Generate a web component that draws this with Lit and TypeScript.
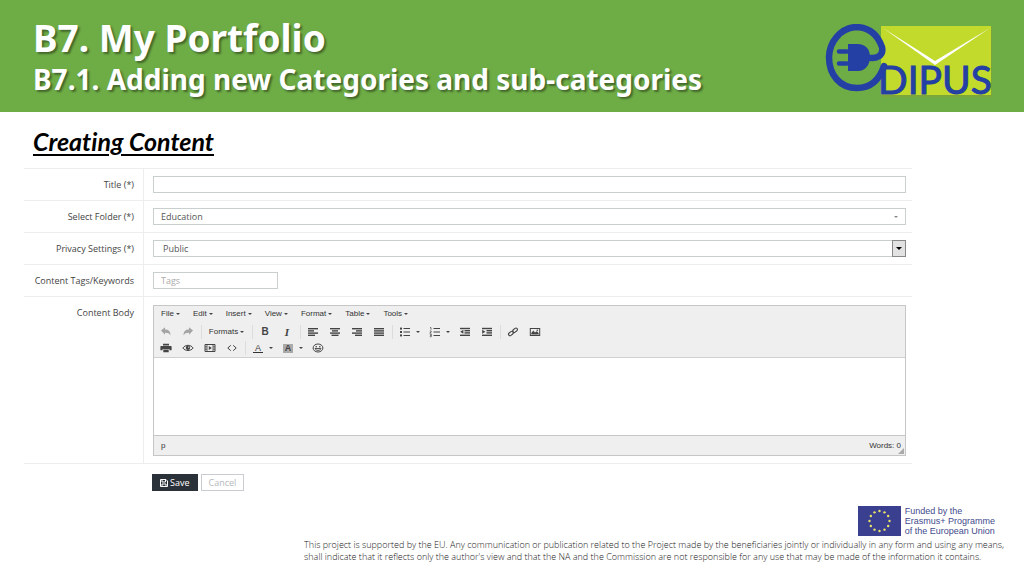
import { LitElement, html, css, svg } from "lit";
import { customElement, property } from "lit/decorators.js";

const line = (x: number, y: number, w: number, h = 1.4) =>
  svg`<rect x=${x} y=${y} width=${w} height=${h} />`;

const icons: Record<string, unknown> = {
  undo: svg`<path fill="#a5a5a5" d="M1 4.6 5 1.2v2.2c3.6 0 5.6 1.8 5.4 6-.9-2-2.3-2.7-5.4-2.7v2z"/>`,
  redo: svg`<path fill="#a5a5a5" d="M11 4.6 7 1.2v2.2c-3.6 0-5.6 1.8-5.4 6 .9-2 2.3-2.7 5.4-2.7v2z"/>`,
  alignleft: svg`${line(1, 2, 10)}${line(1, 4.2, 6)}${line(1, 6.4, 10)}${line(1, 8.6, 7)}`,
  aligncenter: svg`${line(1, 2, 10)}${line(3, 4.2, 6)}${line(1, 6.4, 10)}${line(2.5, 8.6, 7)}`,
  alignright: svg`${line(1, 2, 10)}${line(5, 4.2, 6)}${line(1, 6.4, 10)}${line(4, 8.6, 7)}`,
  alignjustify: svg`${line(1, 2, 10)}${line(1, 4.2, 10)}${line(1, 6.4, 10)}${line(1, 8.6, 10)}`,
  bullist: svg`${line(1, 1.6, 2, 2)}${line(1, 5, 2, 2)}${line(1, 8.4, 2, 2)}${line(4.5, 2, 6.5, 1)}${line(4.5, 5.5, 6.5, 1)}${line(4.5, 9, 6.5, 1)}`,
  numlist: svg`<path fill="none" stroke="currentColor" stroke-width=".7" d="M1 1.6h1v2.2M.8 5h1.4v.9l-1.4 1.1h1.6M.8 8.2h1.5v2.5H.8M1 9.4h1.3"/>${line(4.5, 2, 6.5, 1)}${line(4.5, 5.5, 6.5, 1)}${line(4.5, 9, 6.5, 1)}`,
  outdent: svg`${line(1, 1.8, 10)}${line(5.5, 4, 5.5)}${line(5.5, 6.2, 5.5)}${line(1, 8.6, 10)}<path d="M4.4 3.8v4L1.2 5.8z"/>`,
  indent: svg`${line(1, 1.8, 10)}${line(5.5, 4, 5.5)}${line(5.5, 6.2, 5.5)}${line(1, 8.6, 10)}<path d="M1.2 3.8v4l3.2-2z"/>`,
  link: svg`<g fill="none" stroke="currentColor" stroke-width="1.1"><rect x="-2.6" y="-1.5" width="5.2" height="3" rx="1.5" transform="translate(3.9 7.5) rotate(-38)"/><rect x="-2.6" y="-1.5" width="5.2" height="3" rx="1.5" transform="translate(8.1 4.3) rotate(-38)"/></g>`,
  image: svg`<path fill-rule="evenodd" d="M.8 2h10.400v8H.8zM1.800 3v6h8.400V3z"/><path d="M2.300 8.500V7l2-2.400 1.600 1.800 2-1.200 1.800 2v1.300z"/><circle cx="8.3" cy="4.3" r=".8"/>`,
  print: svg`<path d="M3 1.8h6v1.700H3zM1 4.100h10a.6.6 0 0 1 .6.600v3.500H9.400V7H2.600v1.200H.4V4.700A.6.6 0 0 1 1 4.100zM3.300 7.600h5.400v2.600H3.300z"/>`,
  preview: svg`<path fill="none" stroke="currentColor" d="M.8 6C3.5 2.4 8.5 2.4 11.2 6 8.5 9.4 3.5 9.4.8 6z"/><circle cx="6" cy="5.8" r="2.2"/><circle cx="6.7" cy="5.2" r=".6" fill="#eee"/>`,
  media: svg`<path fill="none" stroke="currentColor" d="M1 2.5h10v7H1z"/><path fill="none" stroke="currentColor" stroke-width=".8" d="M3 2.5v7M9 2.5v7M1 4.800h2M1 7.200h2M9 4.800h2M9 7.200h2"/><path d="M4.800 4.100v3.800L7.800 6z"/>`,
  code: svg`<path fill="none" stroke="currentColor" d="M4.8 3.3 1.8 6l3 2.7M7.2 3.3l3 2.7-3 2.7"/>`,
  smile: svg`<ellipse cx="6" cy="6" rx="4.9" ry="4" fill="none" stroke="currentColor"/><circle cx="4.2" cy="4.7" r=".8"/><circle cx="7.8" cy="4.7" r=".8"/><path fill="none" stroke="currentColor" stroke-width=".9" d="M3 6.5h6C8.5 9 3.5 9 3 6.5z"/>`,
};

const icon = (name: string) =>
  html`<svg class="icon" viewBox="0 0 12 12" width="12" height="12" fill="currentColor" aria-hidden="true">${icons[name]}</svg>`;

@customElement("edipus-logo")
class EdipusLogo extends LitElement {
  static styles = css`
    :host { display: block; }
    .logo { display: block; }
    .word { font-family: "Lato", sans-serif; font-size: 39px; fill: #2440a4; stroke: #2440a4; stroke-width: 1px; }
  `;
  render() {
    return html`<svg class="logo" width="168" height="74" viewBox="0 0 168 74" role="img" aria-label="eDIPUS">
      <rect x="57" y="3" width="110" height="70" fill="#8a9f2c" opacity=".5" />
      <rect x="56" y="2" width="110" height="69" fill="#c1da2c" />
      <path d="M58 4 110 37 165 4 110 41z" fill="#fff" />
      <path d="M41 33C51 36 59 32 57 23 52 9 43 3 30 3A29 31 0 0 0 4 33c0 18 11 31 28 31 15 0 23-10 27-22" fill="none" stroke="#2440a4" stroke-width="6.5" stroke-linecap="round" />
      <path d="M23 20h10c7 0 12 5 12 13s-5 14-12 14H23z" fill="#2440a4" />
      <path d="M14 27.5h8M14 39.5h8" stroke="#2440a4" stroke-width="4.5" stroke-linecap="round" />
      <text class="word" x="53" y="70">DIPUS</text>
    </svg>`;
  }
}

@customElement("rich-editor")
class RichEditor extends LitElement {
  @property() label = "";
  static styles = css`
    :host { display: block; font-family: "Liberation Sans", Arial, sans-serif; font-size: 8px; line-height: 10px; color: #333; }
    .editor { border: 1px solid #c6c6c6; position: relative; }
    .head { background: #efefef; border-bottom: 1px solid #d0d0d0; padding: 1px; }
    button { appearance: none; border: 0; background: none; margin: 0; padding: 0; font: inherit; color: inherit; }
    .menu { display: flex; gap: 13px; padding: 2px 6px 4px; }
    .menu button, .formats { display: flex; align-items: center; gap: 2px; }
    .caret { border: 2px solid transparent; border-top-color: #444; border-bottom: 0; }
    .tools { display: flex; align-items: center; height: 16px; }
    .first { height: 17px; }
    .tool { width: 22px; height: 16px; display: flex; align-items: center; justify-content: center; color: #444; }
    .split { display: flex; align-items: center; width: 30px; }
    .formats { width: 47px; height: 16px; justify-content: center; }
    .sep { width: 1px; height: 14px; margin: 0 1px 0 2px; background: #dcdcdc; }
    .bold { font-weight: 700; font-size: 10px; }
    .italic { font: italic 700 11px "Liberation Serif", serif; }
    .fore { border-bottom: 1px solid #333; padding: 0 2px; line-height: 8px; font-size: 9px; }
    .back { background: #aaa; padding: 0 2px; line-height: 9px; font-size: 9px; font-weight: 700; }
    textarea { display: block; box-sizing: border-box; width: 100%; height: 77px; border: 0; padding: 8px; resize: none; background: #fff; font: inherit; outline: 0; }
    .status { display: flex; justify-content: space-between; background: #efefef; border-top: 1px solid #c6c6c6; padding: 5px 4px 4px 7px; }
    .grip { position: absolute; right: 1px; bottom: 1px; }
  `;
  private tool(name: string) {
    return html`<button class="tool" type="button" aria-label=${name}>${icon(name)}</button>`;
  }
  private split(name: string, face: unknown) {
    return html`<div class="split">
      <button class="tool" type="button" aria-label=${name}>${face}</button>
      <button type="button" aria-label="${name} options"><div class="caret"></div></button>
    </div>`;
  }
  render() {
    const sep = html`<div class="sep"></div>`;
    return html`<div class="editor">
      <div class="head">
        <div class="menu">
          ${["File", "Edit", "Insert", "View", "Format", "Table", "Tools"].map(
            (m) => html`<button type="button">${m}<span class="caret"></span></button>`
          )}
        </div>
        <div class="tools first">
          ${this.tool("undo")}${this.tool("redo")}${sep}
          <button class="formats" type="button">Formats<span class="caret"></span></button>${sep}
          <button class="tool bold" type="button">B</button>
          <button class="tool italic" type="button">I</button>${sep}
          ${["alignleft", "aligncenter", "alignright", "alignjustify"].map((n) => this.tool(n))}${sep}
          ${this.split("bullist", icon("bullist"))}${this.split("numlist", icon("numlist"))}
          ${this.tool("outdent")}${this.tool("indent")}${sep}
          ${this.tool("link")}${this.tool("image")}
        </div>
        <div class="tools">
          ${["print", "preview", "media", "code"].map((n) => this.tool(n))}${sep}
          ${this.split("text colour", html`<span class="fore">A</span>`)}
          ${this.split("background colour", html`<span class="back">A</span>`)}
          ${this.tool("smile")}
        </div>
      </div>
      <textarea aria-label=${this.label}></textarea>
      <div class="status"><span>p</span><span>Words: 0</span></div>
      <svg class="grip" width="6" height="6" viewBox="0 0 6 6" fill="#aaa" aria-hidden="true">
        <path d="M6 0v6H0z" />
      </svg>
    </div>`;
  }
}

@customElement("app-root")
class AppRoot extends LitElement {
  static styles = css`
    :host { display: block; min-height: 100vh; background: #fff; font-family: "Open Sans", "Noto Sans", sans-serif; color: #444; }
    .banner { display: flex; justify-content: space-between; align-items: flex-start; background: #6eac46; height: 112px; box-sizing: border-box; padding: 15px 31px 0 33px; color: #fff; text-shadow: 2px 2px 2px rgba(0, 0, 0, 0.4); }
    h1, h2, h3, p { margin: 0; }
    h1 { font: 700 37px/46px "Noto Sans", sans-serif; }
    h2 { font: 700 28px/36px "Noto Sans", sans-serif; white-space: nowrap; }
    .banner edipus-logo { margin-top: 9px; text-shadow: none; }
    h3 { font: italic 700 25px/28px "Lato", sans-serif; font-variant-ligatures: none; color: #000; padding: 15px 33px 13px; text-decoration: underline; text-decoration-thickness: 2px; text-underline-offset: 3px; }
    form { margin: 0 112px 0 24px; font-size: 9px; line-height: 12px; }
    .row { display: grid; grid-template-columns: 120px 1fr; border-top: 1px solid #ededed; }
    .row > label, .row > .name { text-align: right; padding: 10px 9px 9px 0; border-right: 1px solid #ededed; }
    .cell { padding: 7px 6px 7px 9px; }
    .body .cell { padding-top: 8px; }
    .last { border-bottom: 1px solid #ededed; }
    .pick { position: relative; }
    input, select { appearance: none; display: block; box-sizing: border-box; width: 100%; height: 17px; border: 1px solid #c9cfcf; border-radius: 0; background: #fff; margin: 0; padding: 0 7px; font: inherit; color: #555; outline: 0; }
    .public { padding-left: 9px; }
    .tags { width: 125px; }
    .tags::placeholder { color: #aaa; opacity: 1; }
    .caret { position: absolute; right: 8px; top: 8px; border: 2px solid transparent; border-top-color: #888; border-bottom: 0; }
    .drop { position: absolute; right: 0; top: 0; box-sizing: border-box; width: 14px; height: 17px; border: 1px solid #888; background: #e2e2e2; display: grid; place-items: center; pointer-events: none; }
    .drop::after { content: ""; border: 3px solid transparent; border-top-color: #000; border-bottom: 0; }
    .actions { display: flex; gap: 3px; padding: 10px 0 0 128px; }
    .actions button { display: flex; align-items: center; gap: 2px; height: 17px; border: 1px solid #c9cdd2; background: #fff; color: #b4b8bd; font: inherit; padding: 0 7px; margin: 0; }
    .actions .save { background: #2b3138; border-color: #2b3138; color: #fff; }
    footer { padding: 15px 20px 0; }
    .eu { display: flex; justify-content: flex-end; gap: 4px; padding-right: 9px; }
    .eu p { font: 9px/10px "Liberation Sans", Arial, sans-serif; color: #434a8c; }
    .note { width: fit-content; margin-left: auto; font-size: 9px; font-weight: 300; line-height: 12px; color: #222; padding-top: 3px; }
  `;
  render() {
    const stars = Array.from({ length: 12 }, (_, i) => {
      const a = (i * Math.PI) / 6;
      return svg`<circle cx=${21.5 + 10 * Math.sin(a)} cy=${15 - 10 * Math.cos(a)} r="1.2" />`;
    });
    return html`
      <header class="banner">
        <div>
          <h1>B7. My Portfolio</h1>
          <h2>B7.1. Adding new Categories and sub-categories</h2>
        </div>
        <edipus-logo></edipus-logo>
      </header>
      <main>
        <h3>Creating Content</h3>
        <form @submit=${(e: Event) => e.preventDefault()}>
          <div class="row"><label for="title">Title (*)</label><div class="cell"><input id="title" type="text" /></div></div>
          <div class="row">
            <label for="folder">Select Folder (*)</label>
            <div class="cell"><div class="pick"><select id="folder"><option>Education</option></select><span class="caret"></span></div></div>
          </div>
          <div class="row">
            <label for="privacy">Privacy Settings (*)</label>
            <div class="cell"><div class="pick"><select id="privacy" class="public"><option>Public</option></select><span class="drop"></span></div></div>
          </div>
          <div class="row"><label for="tags">Content Tags/Keywords</label><div class="cell"><input id="tags" class="tags" type="text" placeholder="Tags" /></div></div>
          <div class="row body last">
            <div class="name">Content Body</div>
            <div class="cell"><rich-editor label="Content Body"></rich-editor></div>
          </div>
          <div class="actions">
            <button class="save" type="submit">
              <svg width="8" height="8" viewBox="0 0 8 8" aria-hidden="true"><path fill="none" stroke="#fff" d="M.5.5h5.5l1.5 1.5v5.5h-7zM2 .5v2.5h3.5V.5M2 7.5V5h4v2.5" /></svg>Save
            </button>
            <button type="button">Cancel</button>
          </div>
        </form>
      </main>
      <footer>
        <div class="eu">
          <svg width="43" height="30" viewBox="0 0 43 30" role="img" aria-label="European Union flag"><rect width="43" height="30" fill="#3b3f8f" /><g fill="#e8e36a">${stars}</g></svg>
          <p>Funded by the<br />Erasmus+ Programme<br />of the European Union</p>
        </div>
        <p class="note">This project is supported by the EU. Any communication or publication related to the Project made by the beneficiaries jointly or individually in any form and using any means,<br />shall indicate that it reflects only the author's view and that the NA and the Commission are not responsible for any use that may be made of the information it contains.</p>
      </footer>
    `;
  }
}
